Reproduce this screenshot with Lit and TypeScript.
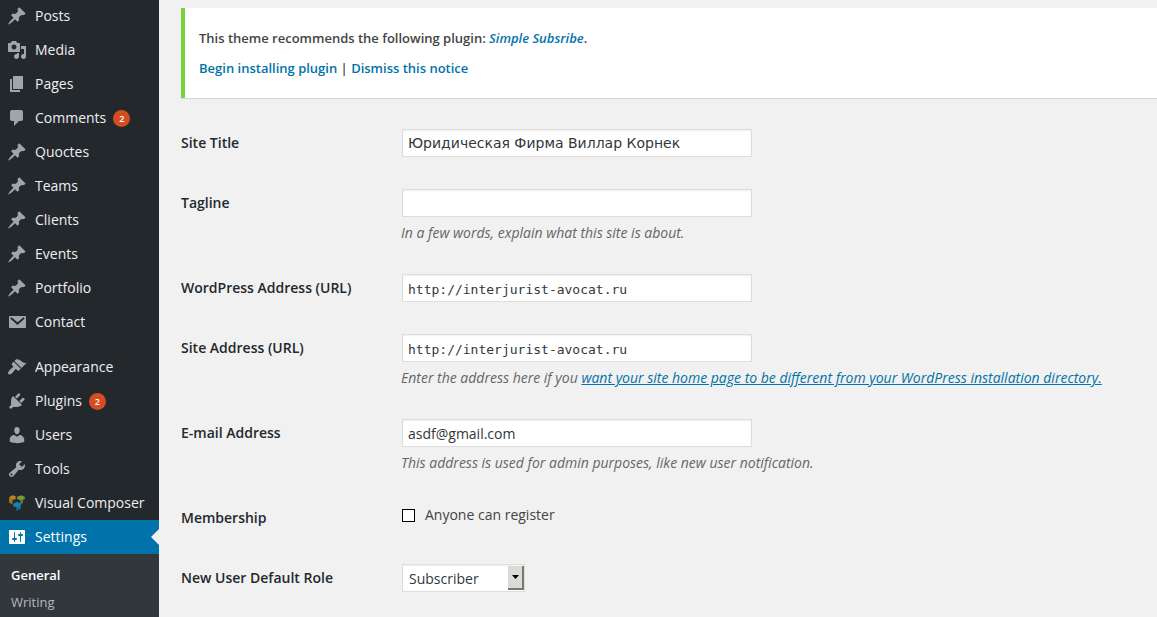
import { LitElement, html, svg, css, nothing, type TemplateResult } from "lit";
import { customElement, property } from "lit/decorators.js";
import { classMap } from "lit/directives/class-map.js";

const icons: Record<string, TemplateResult> = {
  pin: svg`<path d="M10.44 3.02l1.82-1.82 6.36 6.35-1.83 1.82c-1.05-.68-2.48-.57-3.41.36l-.75.75c-.92.93-1.04 2.35-.35 3.41l-1.83 1.82-2.41-2.41-2.8 2.79c-.42.42-3.38 2.71-3.8 2.29s1.86-3.39 2.28-3.81l2.79-2.79L4.1 9.36l1.83-1.82c1.05.69 2.48.57 3.4-.36l.75-.75c.93-.92 1.05-2.35.36-3.41z"/>`,
  media: svg`<path d="M13 11V4c0-.55-.45-1-1-1h-1.67L9 1H5L3.67 3H2c-.55 0-1 .45-1 1v7c0 .55.45 1 1 1h10c.55 0 1-.45 1-1zM7 4.5c1.38 0 2.5 1.12 2.5 2.5S8.38 9.5 7 9.5 4.5 8.38 4.5 7 5.62 4.5 7 4.5zM14 6h5v10.5c0 1.38-1.12 2.5-2.5 2.5S14 17.88 14 16.5s1.12-2.5 2.5-2.5c.17 0 .34.02.5.05V9h-3V6zm-4 8.05V13h2v3.5c0 1.38-1.12 2.5-2.5 2.5S7 17.88 7 16.5 8.12 14 9.5 14c.17 0 .34.02.5.05z"/>`,
  page: svg`<path d="M6 15V2h10v13H6zm-1 1h8v2H3V5h2v11z"/>`,
  comment: svg`<path d="M5 2h9c1.1 0 2 .9 2 2v7c0 1.1-.9 2-2 2h-2l-5 5v-5H5c-1.1 0-2-.9-2-2V4c0-1.1.9-2 2-2z"/>`,
  mail: svg`<path fill-rule="evenodd" d="M3 4h15c.55 0 1 .45 1 1v10c0 .55-.45 1-1 1H3c-.55 0-1-.45-1-1V5c0-.55.45-1 1-1zM3.2 6.5l7.300 6.500 7.300-6.500-1.300-1.200-6 4.900-6-4.900z"/>`,
  brush: svg`<path d="M14.48 11.06L7.41 3.99l1.5-1.5c.5-.56 2.3-.47 3.51.32 1.21.8 1.43 1.28 2.91 2.1 1.18.64 2.45 1.26 4.45.85zm-.71.71L6.7 4.7 4.93 6.47c-.39.39-.39 1.02 0 1.41l1.06 1.06c.39.39.39 1.03 0 1.42-.6.6-1.43 1.11-2.21 1.69-.35.26-.7.53-1.01.84C1.43 14.23.4 16.08 1.4 17.07c.99 1 2.84-.03 4.18-1.36.31-.31.58-.66.85-1.02.57-.78 1.08-1.61 1.69-2.21.39-.39 1.02-.39 1.41 0l1.06 1.06c.39.39 1.02.39 1.41 0z"/>`,
  plug: svg`<path d="M13.11 4.36L9.87 7.6 8 5.73l3.24-3.24c.35-.34 1.05-.2 1.56.32.52.51.66 1.21.31 1.55zm-8 1.77l.91-1.12 9.01 9.01-1.19.84c-.71.71-2.63 1.16-3.82 1.16H6.14L4.9 17.26c-.59.59-1.54.59-2.12 0-.59-.58-.59-1.53 0-2.12l1.24-1.24v-3.88c0-1.13.4-3.19 1.09-3.89zm7.26 3.97l3.24-3.24c.34-.35 1.04-.21 1.55.31.52.51.66 1.21.31 1.55l-3.24 3.25z"/>`,
  user: svg`<path d="M10 9.25c-2.27 0-2.73-3.44-2.73-3.44C7 4.02 7.82 2 9.97 2c2.16 0 2.98 2.02 2.71 3.81 0 0-.41 3.44-2.68 3.44zm0 2.57L12.72 10c2.39 0 4.52 2.33 4.52 4.53v2.49s-3.65 1.13-7.24 1.13c-3.65 0-7.24-1.13-7.24-1.13v-2.49c0-2.25 1.94-4.48 4.47-4.48z"/>`,
  wrench: svg`<path d="M16.68 9.77c-1.34 1.34-3.3 1.67-4.95.99l-5.41 6.52c-.99.99-2.59.99-3.58 0s-.99-2.59 0-3.57l6.52-5.42c-.68-1.65-.35-3.61.99-4.95 1.28-1.28 3.12-1.62 4.72-1.06l-2.89 2.89 2.82 2.82 2.86-2.87c.53 1.58.18 3.39-1.08 4.65zM3.81 16.21c.4.39 1.04.39 1.43 0 .4-.4.4-1.04 0-1.43-.39-.4-1.03-.4-1.43 0-.39.39-.39 1.03 0 1.43z"/>`,
  composer: svg`
    <path fill="#9a7423" d="M2 4.200L5.500 6v5.400L2 9.500z"/>
    <path fill="#b5832a" d="M2 4.200L5 2.200l3.600.8v3.200L5.500 7z"/>
    <path fill="#5c7a36" d="M10 5.600l3.200 1.200v4.600l2.800-1.400V7.200l2-1.200V4z"/>
    <path fill="#7a9838" d="M10 3.800L14.500 2.200 18 4l-2.500 2.800-3 .2L10 5.800z"/>
    <path fill="#166a90" d="M6.200 10.800l3.200 1.400V18l4.600-2.600v-4.600l-4 .8z"/>
    <path fill="#1b80ae" d="M6.200 11l3.600-2.200L14 10.600v1.800l-4.500 2.200-3.300-1.400z"/>`,
  sliders: svg`<path d="M18 16V4c0-.55-.45-1-1-1H3c-.55 0-1 .45-1 1v12c0 .55.45 1 1 1h14c.55 0 1-.45 1-1zM8 11h1c.55 0 1 .45 1 1s-.45 1-1 1H8v1.500c0 .28-.22.5-.5.5s-.5-.22-.5-.5V13H6c-.55 0-1-.45-1-1s.45-1 1-1h1V5.500c0-.28.22-.5.5-.5s.5.22.5.5V11zm5-2h-1c-.55 0-1-.45-1-1s.45-1 1-1h1V5.500c0-.28.22-.5.5-.5s.5.22.5.5V7h1c.55 0 1 .45 1 1s-.45 1-1 1h-1v5.500c0 .28-.22.5-.5.5s-.5-.22-.5-.5V9z"/>`,
};

interface MenuItem {
  label: string;
  icon: string;
  count?: number;
  current?: boolean;
  children?: string[];
}

const menuGroups: MenuItem[][] = [
  [
    { label: "Posts", icon: "pin" },
    { label: "Media", icon: "media" },
    { label: "Pages", icon: "page" },
    { label: "Comments", icon: "comment", count: 2 },
    { label: "Quoctes", icon: "pin" },
    { label: "Teams", icon: "pin" },
    { label: "Clients", icon: "pin" },
    { label: "Events", icon: "pin" },
    { label: "Portfolio", icon: "pin" },
    { label: "Contact", icon: "mail" },
  ],
  [
    { label: "Appearance", icon: "brush" },
    { label: "Plugins", icon: "plug", count: 2 },
    { label: "Users", icon: "user" },
    { label: "Tools", icon: "wrench" },
    { label: "Visual Composer", icon: "composer" },
    { label: "Settings", icon: "sliders", current: true, children: ["General", "Writing"] },
  ],
];

@customElement("admin-menu")
export class AdminMenu extends LitElement {
  @property({ attribute: false }) groups: MenuItem[][] = [];

  static styles = css`
    :host { display: block; background: #23282d; overflow: hidden; }
    ul { list-style: none; margin: 0; padding: 0; }
    .menu { margin-top: -1px; display: flex; flex-direction: column; gap: 11px; }
    .link {
      position: relative; display: flex; align-items: center; height: 34px;
      padding-left: 7px; color: #eee; font-size: 14px; line-height: 18px;
      text-decoration: none; white-space: nowrap;
    }
    .icon { width: 20px; height: 20px; margin-right: 8px; flex: none; fill: #a0a5aa; }
    .badge {
      margin-left: 7px; width: 17px; height: 17px; border-radius: 50%;
      background: #d54e21; color: #fff; font-size: 9px; font-weight: 600;
      line-height: 17px; text-align: center;
    }
    .current { background: #0073aa; color: #fff; }
    .current .icon { fill: #fff; }
    .current::after {
      content: ""; position: absolute; right: 0; top: 9px;
      border: 8px solid transparent; border-right-color: #f1f1f1; border-left-width: 0;
    }
    .submenu { background: #32373c; padding: 8px 0 1px; }
    .sublink {
      display: block; padding: 5px 11px; font-size: 13px; line-height: 17px;
      color: #b4b9be; text-decoration: none;
    }
    .chosen { color: #fff; font-weight: 600; }
  `;

  private renderItem(item: MenuItem) {
    return html`<li>
      <a href="#" class=${classMap({ link: true, current: !!item.current })}>
        <svg class="icon" viewBox="0 0 20 20" aria-hidden="true">${icons[item.icon]}</svg>
        <span>${item.label}</span>
        ${item.count ? html`<span class="badge">${item.count}</span>` : nothing}
      </a>
      ${item.children
        ? html`<ul class="submenu">
            ${item.children.map(
              (name, i) => html`<li><a href="#" class=${classMap({ sublink: true, chosen: i === 0 })}>${name}</a></li>`
            )}
          </ul>`
        : nothing}
    </li>`;
  }

  render() {
    return html`<nav class="menu">
      ${this.groups.map((group) => html`<ul>${group.map((item) => this.renderItem(item))}</ul>`)}
    </nav>`;
  }
}

@customElement("settings-form")
export class SettingsForm extends LitElement {
  static styles = css`
    :host { display: block; font-size: 14px; color: #444; }
    .row { display: grid; grid-template-columns: 210px minmax(0, 1fr); column-gap: 10px; }
    .name { padding: 20px 0; line-height: 20px; font-weight: 600; color: #23282d; }
    .field { padding: 15px 10px 15px 0; min-height: 30px; }
    .text, .select {
      display: block; box-sizing: border-box; height: 28px; margin: 1px;
      border: 1px solid #ddd; border-radius: 0; background: #fff; color: #32373c;
      box-shadow: inset 0 1px 2px rgba(0, 0, 0, 0.07);
      font-family: "Open Sans", "DejaVu Sans", sans-serif; font-size: 14px; outline: none;
    }
    .text { width: 350px; max-width: 100%; padding: 3px 5px; }
    .cyrillic { font-family: "DejaVu Sans", sans-serif; }
    .code { font-family: "DejaVu Sans Mono", monospace; font-size: 13px; padding: 5px 5px 3px; }
    .hint { margin: 5px 0 0; line-height: 21px; font-style: italic; color: #666; }
    .hint a { color: #0073aa; }
    .check { display: flex; align-items: center; gap: 10px; line-height: 24px; padding-left: 1px; }
    .box {
      appearance: none; box-sizing: border-box; width: 13px; height: 13px; margin: 0;
      border: 1px solid #000; background: #fff;
    }
    .box:checked { background: #000; box-shadow: inset 0 0 0 2px #fff; }
    .picker { position: relative; width: fit-content; }
    .select { appearance: none; width: 123px; padding: 0 22px 0 6px; }
    .drop {
      position: absolute; right: 2px; top: 2px; bottom: 2px; width: 16px; box-sizing: border-box;
      display: grid; place-items: center; pointer-events: none;
      background: #dcdad5; border: solid #777; border-width: 0 2px 2px 0;
    }
    .drop svg { width: 7px; height: 4px; }
  `;

  render() {
    return html`<form>
      <div class="row">
        <label class="name" for="title">Site Title</label>
        <div class="field"><input id="title" class="text cyrillic" type="text" value="Юридическая Фирма Виллар Корнек" /></div>
      </div>
      <div class="row">
        <label class="name" for="tagline">Tagline</label>
        <div class="field">
          <input id="tagline" class="text" type="text" />
          <p class="hint">In a few words, explain what this site is about.</p>
        </div>
      </div>
      <div class="row">
        <label class="name" for="wpurl">WordPress Address (URL)</label>
        <div class="field"><input id="wpurl" class="text code" type="url" value="http://interjurist-avocat.ru" /></div>
      </div>
      <div class="row">
        <label class="name" for="siteurl">Site Address (URL)</label>
        <div class="field">
          <input id="siteurl" class="text code" type="url" value="http://interjurist-avocat.ru" />
          <p class="hint">Enter the address here if you <a href="#">want your site home page to be different from your WordPress installation directory.</a></p>
        </div>
      </div>
      <div class="row">
        <label class="name" for="email">E-mail Address</label>
        <div class="field">
          <input id="email" class="text" type="email" value="asdf@gmail.com" />
          <p class="hint">This address is used for admin purposes, like new user notification.</p>
        </div>
      </div>
      <div class="row">
        <span class="name">Membership</span>
        <div class="field">
          <label class="check"><input class="box" type="checkbox" />Anyone can register</label>
        </div>
      </div>
      <div class="row">
        <label class="name" for="role">New User Default Role</label>
        <div class="field">
          <div class="picker">
            <select id="role" class="select">
              <option>Subscriber</option>
              <option>Contributor</option>
              <option>Author</option>
              <option>Editor</option>
              <option>Administrator</option>
            </select>
            <span class="drop" aria-hidden="true"><svg viewBox="0 0 7 4"><path d="M0 0h7L3.500 4z" /></svg></span>
          </div>
        </div>
      </div>
    </form>`;
  }
}

@customElement("app-root")
export class AppRoot extends LitElement {
  static styles = css`
    :host {
      display: grid; grid-template-columns: 159px minmax(0, 1fr); min-height: 100vh;
      background: #f1f1f1; font-family: "Open Sans", "DejaVu Sans", sans-serif;
    }
    .content { padding: 8px 0 0 22px; }
    .notice {
      display: flex; flex-direction: column; gap: 10px; padding: 20px 14px;
      margin-bottom: 15px; background: #fff; border-left: 4px solid #7ad03a;
      box-shadow: 0 1px 1px rgba(0, 0, 0, 0.1);
      font-size: 13px; line-height: 20px; font-weight: 600; color: #444;
    }
    .notice p { margin: 0; }
    .notice a { color: #0073aa; text-decoration: none; }
  `;

  render() {
    return html`
      <admin-menu .groups=${menuGroups}></admin-menu>
      <main class="content">
        <div class="notice">
          <p>This theme recommends the following plugin: <em><a href="#">Simple Subsribe</a></em>.</p>
          <p><a href="#">Begin installing plugin</a> | <a href="#">Dismiss this notice</a></p>
        </div>
        <settings-form></settings-form>
      </main>
    `;
  }
}
